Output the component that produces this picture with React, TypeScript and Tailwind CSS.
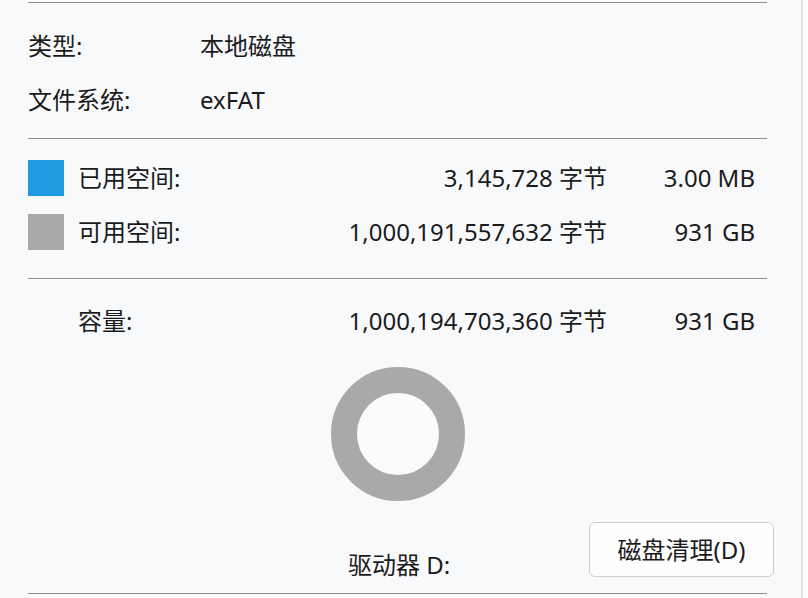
import React from "react";

const font = {
  fontFamily: '"Noto Sans", "Noto Sans CJK SC", sans-serif',
};

function Rule() {
  return <div className="h-px bg-[#8f8f8f]" />;
}

function InfoRow({ label, value }: { label: string; value: string }) {
  return (
    <div className="flex h-[54px] items-center">
      <span className="w-[172px]">{label}</span>
      <span>{value}</span>
    </div>
  );
}

function SpaceRow({
  swatch,
  label,
  bytes,
  size,
}: {
  swatch?: string;
  label: string;
  bytes: string;
  size: string;
}) {
  return (
    <div className="flex h-[54px] items-center">
      <div className="flex w-[50px] shrink-0 items-center">
        {swatch && <div className={`h-[36px] w-[36px] ${swatch}`} />}
      </div>
      <span className="w-[200px] shrink-0">{label}</span>
      <span className="w-[329px] shrink-0 text-right">{bytes}</span>
      <span className="w-[148px] shrink-0 text-right">{size}</span>
    </div>
  );
}

export default function App() {
  return (
    <div
      className="flex h-[598px] w-[808px] overflow-hidden bg-[#fcfcfd] text-[24px] leading-[32px] text-[#1b1b1b]"
      style={font}
    >
      <div className="flex w-[801px] flex-col bg-[#f8f9fb] pl-[28px] pr-[34px] pt-[2px]">
        <Rule />
        <div className="mt-[16px]">
          <InfoRow label="类型:" value="本地磁盘" />
          <InfoRow label="文件系统:" value="exFAT" />
        </div>
        <div className="mt-[11px]">
          <Rule />
        </div>
        <div className="mt-[12px]">
          <SpaceRow
            swatch="bg-[#1f9ae0]"
            label="已用空间:"
            bytes="3,145,728 字节"
            size="3.00 MB"
          />
          <SpaceRow
            swatch="bg-[#a9a9aa]"
            label="可用空间:"
            bytes="1,000,191,557,632 字节"
            size="931 GB"
          />
        </div>
        <div className="mt-[19px]">
          <Rule />
        </div>
        <div className="mt-[15px]">
          <SpaceRow label="容量:" bytes="1,000,194,703,360 字节" size="931 GB" />
        </div>
        <div className="mt-[19px] flex justify-center">
          <svg width="134" height="134" viewBox="0 0 134 134">
            <circle cx="67" cy="67" r="54" fill="#fafbfc" stroke="#a9a9aa" strokeWidth="26" />
          </svg>
        </div>
        <div className="mt-[21px] flex h-[55px]">
          <div className="ml-[320px] w-[241px] shrink-0 pt-[27px]">驱动器 D:</div>
          <button className="h-[55px] w-[185px] shrink-0 rounded-[6px] border border-[#cdcdcd] bg-[#fdfdfd] text-[24px] text-[#1b1b1b]">
            磁盘清理(D)
          </button>
        </div>
        <div className="mt-[16px]">
          <Rule />
        </div>
      </div>
      <div className="w-[2px] bg-[#e3e4e6]" />
    </div>
  );
}
